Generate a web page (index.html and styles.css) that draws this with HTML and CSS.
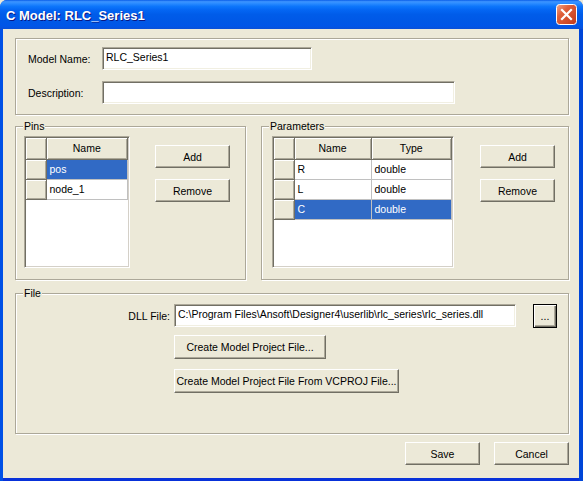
FILE: index.html
```html
<!DOCTYPE html>
<html lang="en">

<head>
  <meta charset="UTF-8">
  <title>C Model: RLC_Series1</title>
  <link rel="stylesheet" href="styles.css">
</head>

<body>
  <div class="window">
    <div class="titlebar">
      <span class="title">C Model: RLC_Series1</span>
      <span class="close">
        <svg width="21" height="21" viewBox="0 0 21 21">
          <defs>
            <linearGradient id="closeFill" x1="0" y1="0" x2="1" y2="1">
              <stop offset="0" stop-color="#f0a88c" />
              <stop offset="0.35" stop-color="#e0603a" />
              <stop offset="1" stop-color="#c0391a" />
            </linearGradient>
          </defs>
          <rect x="0.5" y="0.5" width="20" height="20" rx="3" fill="url(#closeFill)" stroke="#fff" />
          <path d="M6 6 L15 15 M15 6 L6 15" stroke="#fff" stroke-width="2.2" stroke-linecap="square" />
        </svg>
      </span>
    </div>

    <div class="client">
      <div class="group group-model">
        <span class="label">Model Name:</span>
        <div class="field field-name">RLC_Series1</div>
        <span class="label">Description:</span>
        <div class="field field-desc"></div>
      </div>

      <div class="lists">
        <div class="group group-pins">
          <span class="legend">Pins</span>
          <div class="grid grid-pins">
            <table>
              <colgroup>
                <col class="col-sel">
                <col>
              </colgroup>
              <tr>
                <th></th>
                <th>Name</th>
              </tr>
              <tr>
                <td class="sel"></td>
                <td class="picked">pos</td>
              </tr>
              <tr>
                <td class="sel"></td>
                <td>node_1</td>
              </tr>
            </table>
          </div>
          <div class="side-buttons">
            <div class="btn">Add</div>
            <div class="btn">Remove</div>
          </div>
        </div>

        <div class="group group-params">
          <span class="legend">Parameters</span>
          <div class="grid grid-params">
            <table>
              <colgroup>
                <col class="col-sel">
                <col class="col-name">
                <col>
              </colgroup>
              <tr>
                <th></th>
                <th>Name</th>
                <th>Type</th>
              </tr>
              <tr>
                <td class="sel"></td>
                <td>R</td>
                <td>double</td>
              </tr>
              <tr>
                <td class="sel"></td>
                <td>L</td>
                <td>double</td>
              </tr>
              <tr>
                <td class="sel"></td>
                <td class="picked">C</td>
                <td class="picked">double</td>
              </tr>
            </table>
          </div>
          <div class="side-buttons">
            <div class="btn">Add</div>
            <div class="btn">Remove</div>
          </div>
        </div>
      </div>

      <div class="group group-file">
        <span class="legend">File</span>
        <span class="label dll-label">DLL File:</span>
        <div class="dll-row">
          <div class="field field-dll">C:\Program Files\Ansoft\Designer4\userlib\rlc_series\rlc_series.dll</div>
          <div class="btn btn-browse">...</div>
        </div>
        <div class="btn btn-create">Create Model Project File...</div>
        <div class="btn btn-vcproj">Create Model Project File From VCPROJ File...</div>
      </div>

      <div class="footer">
        <div class="btn">Save</div>
        <div class="btn">Cancel</div>
      </div>
    </div>
  </div>
</body>

</html>
```

FILE: styles.css
```css
html,
body {
  margin: 0;
  padding: 0;
  background: #ece9d8;
}

body {
  font-family: "Liberation Sans", Arial, sans-serif;
  font-size: 10.5px;
  color: #000;
}

.window {
  width: 583px;
  height: 481px;
  display: flex;
  flex-direction: column;
  background: linear-gradient(90deg, #0050e6, #0a52e0 50%, #0046d8);
  border-radius: 7px 7px 0 0;
  overflow: hidden;
}

/* title bar */
.titlebar {
  height: 29px;
  flex: none;
  display: flex;
  align-items: center;
  padding: 0 6px 0 6px;
  background: linear-gradient(#0a5de8 0%, #3d95ff 6%, #2a8bff 12%, #0d76fb 22%, #0466f3 34%, #005ce9 50%, #0058e6 75%, #0056e8 90%, #0a50d8 100%);
}

.title {
  flex: 1;
  font-weight: bold;
  font-size: 13px;
  color: #fff;
  text-shadow: 1px 1px #0a1883;
  padding-top: 1px;
}

.close {
  width: 21px;
  height: 21px;
  display: flex;
}

/* client area */
.client {
  flex: 1;
  margin: 0 4px 3px 3px;
  background: #ece9d8;
  padding: 9px 10px 0 12px;
  box-shadow: 0 3px 0 #0831d9;
}

/* group boxes */
.group {
  position: relative;
  box-sizing: border-box;
  border: 1px solid #aca899;
  box-shadow: inset 1px 1px #fff, 1px 1px #fff;
}

.legend {
  position: absolute;
  top: -8px;
  left: 7px;
  padding: 0 1px;
  background: #ece9d8;
  line-height: 14px;
}

.group-model {
  width: 554px;
  height: 77px;
  display: grid;
  grid-template-columns: 74px auto;
  row-gap: 11px;
  align-items: center;
  align-content: start;
  padding: 8px 0 0 12px;
}

/* sunken text fields */
.field {
  box-sizing: border-box;
  height: 23px;
  line-height: 19px;
  padding: 0 3px;
  background: #fff;
  border-top: 1px solid #aca899;
  border-left: 1px solid #aca899;
  border-right: 1px solid #fff;
  border-bottom: 1px solid #fff;
  box-shadow: inset 1px 1px #716f64, inset -1px -1px #f1efe2;
  white-space: nowrap;
  overflow: hidden;
}

.field-name {
  width: 210px;
}

.field-desc {
  width: 353px;
}

.field-dll {
  width: 342px;
}

/* raised buttons */
.btn {
  box-sizing: border-box;
  width: 75px;
  height: 23px;
  display: flex;
  align-items: center;
  justify-content: center;
  background: #ece9d8;
  border-top: 1px solid #fff;
  border-left: 1px solid #fff;
  border-right: 1px solid #716f64;
  border-bottom: 1px solid #716f64;
  box-shadow: inset -1px -1px #aca899;
  white-space: nowrap;
}

/* pins & parameters */
.lists {
  display: flex;
  gap: 15px;
  margin-top: 11px;
}

.group-pins,
.group-params {
  height: 154px;
  display: flex;
  align-items: flex-start;
  padding: 9px 0 0 8px;
}

.group-pins {
  width: 231px;
  gap: 25px;
}

.group-params {
  width: 308px;
  gap: 26px;
  padding-left: 10px;
}

.side-buttons {
  display: flex;
  flex-direction: column;
  gap: 11px;
  margin-top: 9px;
}

.grid {
  box-sizing: border-box;
  height: 132px;
  background: #fff;
  border-top: 1px solid #aca899;
  border-left: 1px solid #aca899;
  border-right: 1px solid #fff;
  border-bottom: 1px solid #fff;
  box-shadow: inset 1px 1px #716f64, inset -1px -1px #d4d0c8;
  padding: 1px;
}

.grid-pins {
  width: 106px;
}

.grid-params {
  width: 182px;
}

.grid table {
  width: 100%;
  table-layout: fixed;
  border-collapse: collapse;
}

.col-sel {
  width: 20px;
}

.col-name {
  width: 77px;
}

.grid th {
  box-sizing: border-box;
  height: 21px;
  padding: 0;
  font-weight: normal;
  text-align: center;
  background: #ece9d8;
  border-right: 1px solid #716f64;
  border-bottom: 1px solid #716f64;
  box-shadow: inset 1px 1px #fff, inset -1px -1px #aca899;
}

.grid td {
  box-sizing: border-box;
  height: 20px;
  padding: 0 0 0 3px;
  border-right: 1px solid #c0c0c0;
  border-bottom: 1px solid #c0c0c0;
  white-space: nowrap;
}

.grid td.sel {
  padding: 0;
  background: #ece9d8;
  border-right: 1px solid #716f64;
  border-bottom: 1px solid #716f64;
  box-shadow: inset 1px 1px #fff, inset -1px -1px #aca899;
}

.grid td.picked {
  background: #316ac5;
  color: #fff;
}

/* file */
.group-file {
  width: 554px;
  height: 141px;
  margin-top: 13px;
  display: grid;
  grid-template-columns: 158px auto;
  align-items: center;
  align-content: start;
  justify-items: start;
  padding-top: 10px;
}

.dll-label {
  justify-self: end;
  padding-right: 4px;
}

.dll-row {
  display: flex;
  align-items: flex-start;
  gap: 17px;
}

.btn-browse {
  width: 24px;
  height: 24px;
  border: 1px solid #000;
  box-shadow: inset 1px 1px #fff, inset -1px -1px #716f64, inset -2px -2px #aca899;
}

.btn-create {
  grid-column: 2;
  width: 152px;
  height: 24px;
  margin-top: 7px;
}

.btn-vcproj {
  grid-column: 2;
  width: 225px;
  height: 24px;
  margin-top: 10px;
}

/* footer */
.footer {
  width: 554px;
  display: flex;
  justify-content: flex-end;
  gap: 14px;
  margin-top: 8px;
}
```
